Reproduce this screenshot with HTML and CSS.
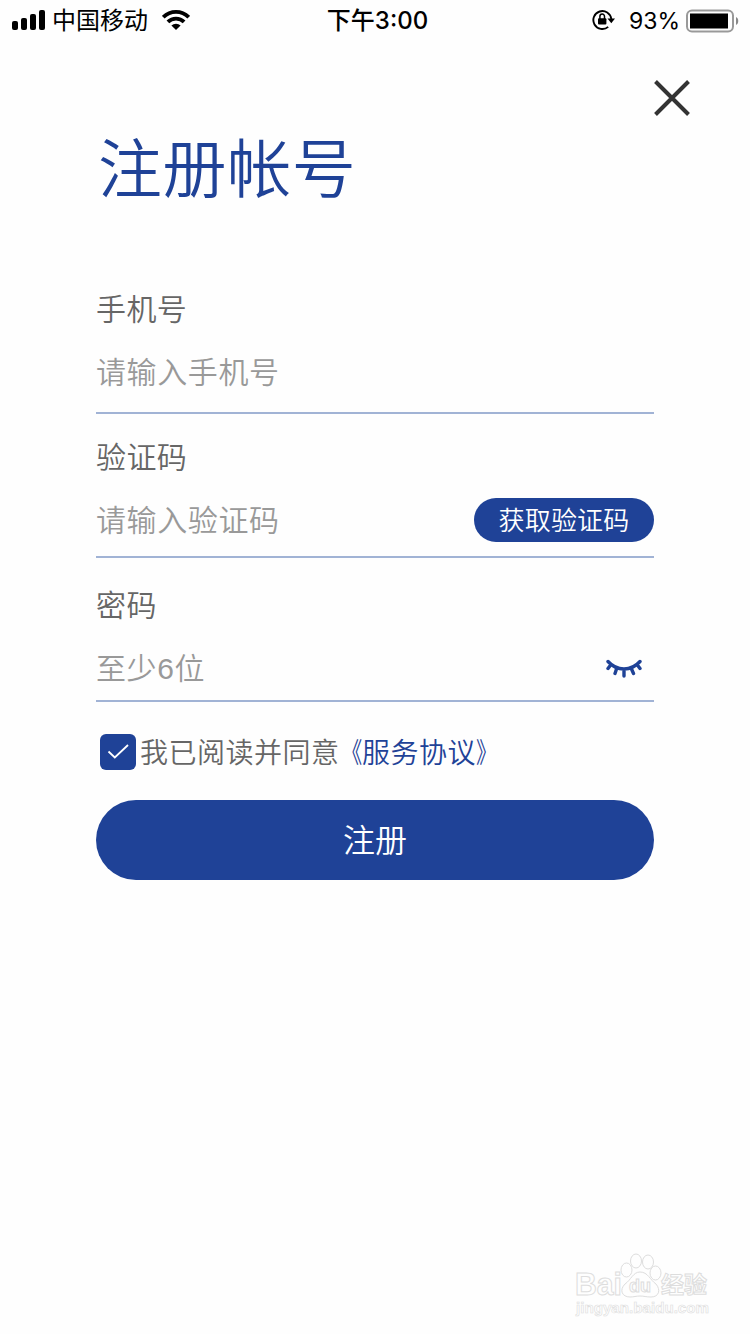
FILE: index.html
```
<!DOCTYPE html>
<html lang="zh-CN">
<head>
  <meta charset="UTF-8">
  <title>注册帐号</title>
  <meta name="viewport" content="width=device-width, initial-scale=1.0">
  <link rel="stylesheet" href="styles.css">
</head>
<body>
  <!-- 状态栏 -->
  <header class="status-bar">
    <div class="status-left">
      <svg class="signal" width="34" height="20" viewBox="0 0 34 20">
        <rect x="0" y="11" width="6" height="9" rx="2"/>
        <rect x="9" y="8" width="6" height="12" rx="2"/>
        <rect x="18" y="4" width="6" height="16" rx="2"/>
        <rect x="27" y="0" width="6" height="20" rx="2"/>
      </svg>
      <span class="carrier">中国移动</span>
      <svg class="wifi" width="28" height="20" viewBox="0 0 28 20">
        <path d="M1.3 7.2A18 18 0 0 1 26.7 7.2M5.9 11.9A11.5 11.5 0 0 1 22.1 11.9" fill="none" stroke="#000" stroke-width="3.8"/>
        <path d="M9.4 15.5a6.6 6.6 0 0 1 9.2 0L14 20z"/>
      </svg>
    </div>
    <div class="status-time">下午3:00</div>
    <div class="status-right">
      <svg class="rotate-lock" width="24" height="22" viewBox="0 0 24 22">
        <path d="M16.2 17.9A9 9 0 1 1 19.3 10" fill="none" stroke="#000" stroke-width="1.9"/>
        <path d="M15.5 9.5h7.5l-3.7 4.8z"/>
        <rect x="6" y="9.2" width="8.4" height="6.2" rx="1"/>
        <path d="M7.9 10V7.4a2.3 2.3 0 0 1 4.6 0V10" fill="none" stroke="#000" stroke-width="1.5"/>
      </svg>
      <span class="percent">93%</span>
      <svg class="battery" width="53" height="24" viewBox="0 0 53 24">
        <rect x="1" y="1.500" width="46" height="21" rx="5" fill="none" stroke="#999" stroke-width="2"/>
        <rect x="4" y="4.500" width="38" height="15"/>
        <path d="M50 8c3 1.2 3 6.8 0 8z" fill="#888"/>
      </svg>
    </div>
  </header>

  <div class="toolbar">
    <button class="close" aria-label="关闭">
      <svg width="36" height="36" viewBox="0 0 36 36">
        <path d="M1.5 1.5l33 33M34.5 1.5l-33 33" stroke="#333" stroke-width="4"/>
      </svg>
    </button>
  </div>

  <!-- 注册表单 -->
  <main class="register">
    <h1>注册帐号</h1>
    <form>
      <div class="field field-phone">
        <label for="phone">手机号</label>
        <div class="field-row">
          <input type="tel" id="phone" placeholder="请输入手机号">
        </div>
      </div>
      <div class="field field-code">
        <label for="code">验证码</label>
        <div class="field-row">
          <input type="text" id="code" placeholder="请输入验证码">
          <button type="button" class="get-code">获取验证码</button>
        </div>
      </div>
      <div class="field field-password">
        <label for="password">密码</label>
        <div class="field-row">
          <input type="password" id="password" placeholder="至少6位">
          <svg class="eye" width="36" height="20" viewBox="0 0 36 20">
            <path d="M2 3.5C11 13.5 25 13.5 34 3.5M5 6.5L2 10.5M10.5 11L9 15.5M18 12V18M25.5 11L27.500 15.500M31 6.500L34 10.500" fill="none" stroke="#1f4297" stroke-width="3.4" stroke-linecap="round"/>
          </svg>
        </div>
      </div>
      <div class="agreement">
        <span class="checkbox">
          <svg width="36" height="36" viewBox="0 0 36 36">
            <path d="M8.5 17.5l6.3 6L28 11" fill="none" stroke="#fff" stroke-width="1.8"/>
          </svg>
        </span>
        <span class="agree-text">我已阅读并同意</span>
        <a href="#"><span class="quote-open">《</span>服务协议<span class="quote-close">》</span></a>
      </div>
      <button type="button" class="submit">注册</button>
    </form>
  </main>

  <!-- 水印 -->
  <svg class="watermark" width="150" height="72" viewBox="0 0 150 72">
    <g class="outline">
      <ellipse cx="56.5" cy="18" rx="5.5" ry="7"/>
      <ellipse cx="66" cy="9" rx="5.5" ry="7"/>
      <ellipse cx="78" cy="10" rx="5.5" ry="7"/>
      <ellipse cx="85.5" cy="21" rx="5.5" ry="7"/>
      <path d="M70 20c-7 0-9 8-15 12c-6 6-3 13 5 13c4 0 6-1 10-1s6 1 11 1c8 0 10-7 5-13c-6-4-8-12-16-12z"/>
      <text class="bai" x="5" y="43" textLength="47" lengthAdjust="spacingAndGlyphs">Bai</text>
      <text class="du" x="59" y="40" textLength="22" lengthAdjust="spacingAndGlyphs">du</text>
      <text class="jingyan" x="91" y="41" textLength="46">经验</text>
      <text class="site" x="6" y="61" textLength="133" lengthAdjust="spacingAndGlyphs">jingyan.baidu.com</text>
    </g>
  </svg>
</body>
</html>
```
FILE: styles.css
```
* {
  margin: 0;
  padding: 0;
  box-sizing: border-box;
}

body {
  width: 750px;
  height: 1334px;
  background: #fefefe;
  color: #666;
  font-family: "Liberation Sans", "Noto Sans CJK SC", sans-serif;
  font-weight: 350;
  overflow: hidden;
}

button {
  border: none;
  background: none;
  font: inherit;
}

svg {
  display: block;
  flex-shrink: 0;
}

/* 状态栏 */
.status-bar {
  display: grid;
  grid-template-columns: 1fr auto 1fr;
  height: 40px;
  padding: 0 11px 0 12px;
  color: #000;
  font-family: Inter, "Noto Sans CJK SC", sans-serif;
  font-size: 24px;
  font-weight: 400;
  line-height: 42px;
}

.status-left,
.status-right {
  display: flex;
  align-items: center;
}

.status-right {
  justify-content: flex-end;
}

.signal,
.wifi {
  margin-bottom: 2px;
}

.carrier {
  margin: 0 14px 0 6px;
}

.status-time {
  padding-left: 4px;
  font-weight: 500;
}

.rotate-lock {
  margin: 0 13px 2px 0;
}

.percent {
  margin-right: 6px;
  font-size: 23px;
}

.battery {
  margin-bottom: 1px;
}

/* 关闭按钮 */
.toolbar {
  display: flex;
  justify-content: flex-end;
  padding: 40px 60px 0 0;
}

.close {
  width: 36px;
  height: 36px;
}

/* 表单 */
.register {
  padding: 0 96px;
}

.register h1 {
  height: 170px;
  padding-left: 2px;
  color: #1f4297;
  font-size: 64px;
  font-weight: 350;
  letter-spacing: 0.6px;
  line-height: 109px;
}

.field {
  border-bottom: 2px solid #a1b3d5;
}

.field label {
  display: block;
  height: 44px;
  font-size: 30px;
  letter-spacing: 0.4px;
  line-height: 47px;
}

.field-row {
  display: flex;
  align-items: center;
  height: 60px;
  margin-top: 12px;
}

.field-phone {
  padding-bottom: 10px;
}

.field-code {
  padding: 20px 0 6px;
}

.field-password {
  padding: 24px 0 2px;
}

.field input {
  flex: 1;
  min-width: 0;
  height: 60px;
  padding-top: 2px;
  border: none;
  outline: none;
  background: none;
  color: #333;
  font: inherit;
  font-size: 30px;
  letter-spacing: 0.6px;
}

.field input::placeholder {
  color: #999;
}

.get-code {
  width: 180px;
  height: 44px;
  border-radius: 22px;
  background: #1f4297;
  color: #fff;
  font-size: 26px;
  letter-spacing: 0.2px;
  line-height: 46px;
}

.eye {
  margin-right: 12px;
}

.agreement {
  display: flex;
  align-items: center;
  height: 36px;
  margin-top: 32px;
  padding-left: 4px;
  font-size: 28px;
  letter-spacing: 0.5px;
  line-height: 36px;
}

.checkbox {
  width: 36px;
  height: 36px;
  margin-right: 4px;
  border-radius: 6px;
  background: #1f4297;
}

.agree-text,
.agreement a {
  padding-top: 3px;
}

.agreement a {
  margin-left: -6px;
  color: #1f4297;
  text-decoration: none;
}

.quote-open,
.quote-close {
  display: inline-block;
  transform: scaleX(0.75);
}

.quote-open {
  transform-origin: right;
}

.quote-close {
  transform-origin: left;
}

.submit {
  width: 558px;
  height: 80px;
  margin-top: 30px;
  border-radius: 40px;
  background: #1f4297;
  color: #fff;
  font-size: 32px;
  line-height: 82px;
}

/* 水印 */
.watermark {
  position: absolute;
  left: 570px;
  top: 1252px;
}

.outline {
  fill: #fefefe;
  stroke: #ddd;
  stroke-width: 1;
  font-family: "Liberation Sans", "Noto Sans CJK SC", sans-serif;
  font-weight: 700;
}

.bai {
  font-size: 31px;
}

.du {
  font-size: 18px;
}

.jingyan {
  font-size: 23px;
}

.site {
  font-size: 15px;
  stroke-width: 0.6;
}
```
